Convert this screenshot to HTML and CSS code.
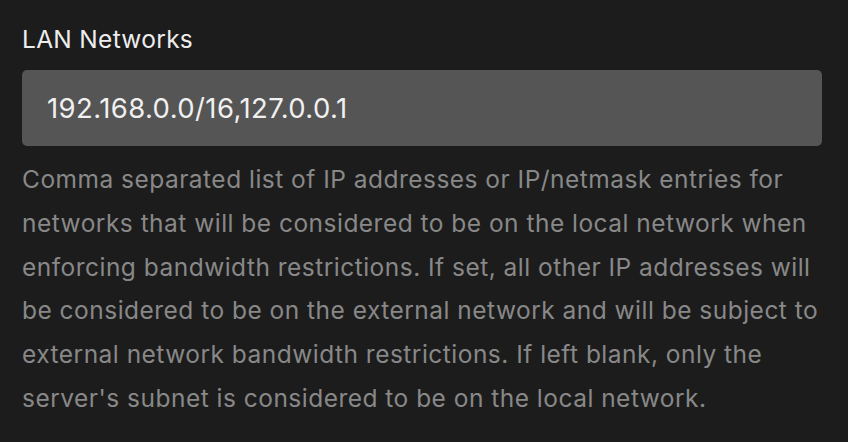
FILE: index.html
```html
<!DOCTYPE html>
<html>
<head>
<meta charset="utf-8">
<link rel="stylesheet" href="styles.css">
</head>
<body>
<div class="field">
  <label class="label" for="lan">LAN Networks</label>
  <input id="lan" class="input" type="text" value="192.168.0.0/16,127.0.0.1">
  <p class="help">Comma separated list of IP addresses or IP/netmask entries for networks that will be considered to be on the local network when enforcing bandwidth restrictions. If set, all other IP addresses will be considered to be on the external network and will be subject to external network bandwidth restrictions. If left blank, only the server's subnet is considered to be on the local network.</p>
</div>
</body>
</html>
```
FILE: styles.css
```css
html, body {
  margin: 0;
  padding: 0;
  background: #1c1c1c;
  height: 100%;
}
body {
  font-family: Inter, "Noto Sans", sans-serif;
  overflow: hidden;
}
.field {
  padding: 22px 26px 0 22px;
  display: flex;
  flex-direction: column;
}
.label {
  color: #ededed;
  font-size: 24.5px;
  font-weight: 400;
  letter-spacing: 0.3px;
  line-height: 34px;
}
.input {
  margin-top: 14px;
  height: 76px;
  box-sizing: border-box;
  border: none;
  border-radius: 5px;
  background: #555555;
  color: #f0f0f0;
  font-family: Inter, "Noto Sans", sans-serif;
  font-size: 27.5px;
  letter-spacing: 0.4px;
  padding: 0 25px;
  outline: none;
}
.help {
  margin: 12px 0 0 0;
  color: #888888;
  font-size: 24.5px;
  letter-spacing: 0.48px;
  line-height: 43.8px;
}
```
